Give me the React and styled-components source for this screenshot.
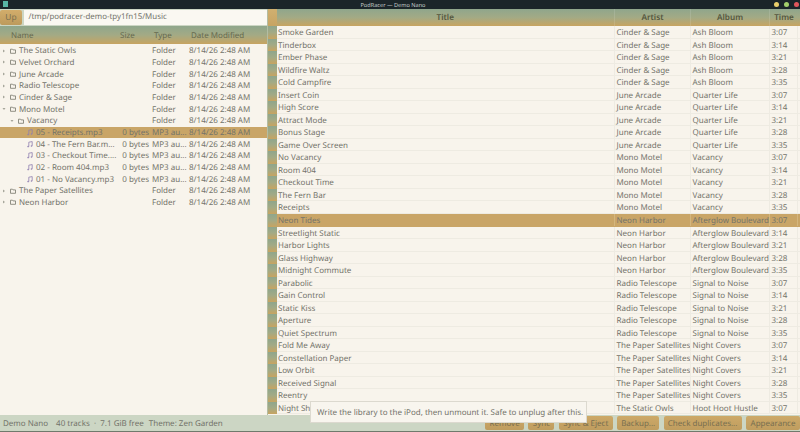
import React from 'react';
import styled, { createGlobalStyle } from 'styled-components';

const GlobalStyle = createGlobalStyle`
  html, body {
    margin: 0;
    padding: 0;
    background: #ccd6c4;
  }
  * {
    box-sizing: border-box;
  }
`;

const headerGradient = 'linear-gradient(to bottom, #8fa68c 0%, #a3aa85 50%, #c7a461 100%)';

const Window = styled.div`
  width: 800px;
  height: 432px;
  display: flex;
  flex-direction: column;
  overflow: hidden;
  position: relative;
  font-family: "Noto Sans", sans-serif;
  font-size: 8px;
  text-rendering: geometricPrecision;
  color: #73736a;
  background: #ccd6c4;
`;

const TitleBar = styled.div`
  height: 9px;
  flex: none;
  display: flex;
  align-items: center;
  justify-content: center;
  position: relative;
  padding-right: 14px;
  background: #1b2529;
  color: #c6cccb;
  font-size: 5.6px;
`;

const AppIcon = styled.span`
  position: absolute;
  left: 3px;
  top: 1px;
  width: 5px;
  height: 6px;
  background: #58b5a5;
`;

const Dots = styled.div`
  position: absolute;
  right: 1px;
  top: 2px;
  display: flex;
  gap: 5px;
`;

const Dot = styled.span`
  width: 5px;
  height: 5px;
  border-radius: 50%;
  background: ${(p) => p.$color};
`;

const Panes = styled.div`
  flex: 1;
  min-height: 0;
  display: flex;
`;

const LeftPane = styled.div`
  width: 267px;
  flex: none;
  display: flex;
  flex-direction: column;
  background: #f8f4ec;
`;

const PathBar = styled.div`
  height: 17px;
  flex: none;
  display: flex;
  gap: 2px;
  padding-top: 1px;
  background: #ccd6c4;
`;

const UpButton = styled.div`
  width: 22px;
  height: 15px;
  display: flex;
  align-items: center;
  justify-content: center;
  border-radius: 2px;
  background: linear-gradient(to bottom, #d2ad6b, #bd9a5c);
  color: #7a7150;
  font-size: 8.4px;
`;

const PathInput = styled.div`
  flex: 1;
  height: 15px;
  padding-left: 4.5px;
  line-height: 15px;
  background: #faf8f2;
  font-size: 7.9px;
`;

const FileHeader = styled.div`
  height: 18px;
  flex: none;
  display: grid;
  grid-template-columns: 120px 34px 37px 1fr;
  align-items: center;
  padding-top: 1px;
  background: ${headerGradient};
  color: #66694f;
`;

const HeaderLabel = styled.span`
  padding-left: ${(p) => p.$left || 0}px;
`;

const FileList = styled.div`
  flex: 1;
  padding-top: 1px;
`;

const FileRow = styled.div`
  height: 11.67px;
  display: grid;
  grid-template-columns: 122px 29px 37px 1fr;
  align-items: center;
  white-space: nowrap;
  background: ${(p) => (p.$selected ? '#c9a567' : 'transparent')};
`;

const NameCell = styled.div`
  display: flex;
  align-items: center;
  padding-left: ${(p) => p.$indent}px;
  overflow: hidden;
`;

const Arrow = styled.span`
  width: 8px;
  margin-right: 2px;
  flex: none;
  display: flex;
  justify-content: center;
`;

const CellIcon = styled.svg`
  flex: none;
  margin-right: 3px;
`;

const SizeCell = styled.span`
  text-align: right;
  padding-right: 2px;
`;

const TypeCell = styled.span`
  padding-left: 1px;
  overflow: hidden;
`;

const DateCell = styled.span`
  padding-left: 1px;
`;

const Splitter = styled.div`
  width: 1px;
  flex: none;
  background: #b3bda3;
`;

const RightPane = styled.div`
  flex: 1;
  min-width: 0;
  display: flex;
  flex-direction: column;
  background: #f8f4ec;
`;

const trackColumns = '8.5px 338.5px 76px 79px 28px 1fr';

const TrackHeader = styled.div`
  height: 17px;
  flex: none;
  display: grid;
  grid-template-columns: ${trackColumns};
  background: ${headerGradient};
  color: #55573f;
  font-weight: 600;
  font-size: 8.2px;
  line-height: 17px;
  text-align: center;
`;

const CornerCell = styled.span`
  background: linear-gradient(to bottom, #d0b070, #c7a463);
`;

const HeaderCell = styled.span`
  border-right: 1px solid rgba(255, 255, 255, 0.12);
`;

const TrackRow = styled.div`
  height: 12.54px;
  display: grid;
  grid-template-columns: ${trackColumns};
  white-space: nowrap;
  line-height: 13.5px;
  background: ${(p) => (p.$selected ? '#c9a567' : 'transparent')};
  border-bottom: 1px solid ${(p) => (p.$selected ? '#c9a567' : '#eeebe2')};
`;

const RowHandle = styled.span`
  margin-bottom: -1px;
  background: ${headerGradient};
`;

const TrackCell = styled.span`
  padding-left: 1.5px;
  border-right: 1px solid ${(p) => (p.$selected ? '#d4b67e' : '#eeebe2')};
  overflow: hidden;
`;

const StatusBar = styled.div`
  height: 17px;
  flex: none;
  display: flex;
  align-items: center;
  padding-left: 3px;
  background: #ccd6c4;
  border-bottom: 1px solid #6f7a6c;
`;

const StatusText = styled.span`
  margin-right: ${(p) => p.$gap || 0}px;
  white-space: pre;
`;

const ButtonRow = styled.div`
  margin-left: auto;
  display: flex;
  gap: 4.4px;
  height: 14px;
`;

const ActionButton = styled.div`
  width: ${(p) => p.$width}px;
  display: flex;
  align-items: center;
  justify-content: center;
  border-radius: 2px;
  background: linear-gradient(to bottom, #cda968, #bf9d5f);
  color: #786f50;
  white-space: nowrap;
`;

const Tooltip = styled.div`
  position: absolute;
  left: 310px;
  top: 401px;
  width: 277px;
  height: 22px;
  display: flex;
  align-items: center;
  padding-left: 6px;
  background: #f8f5ee;
  border: 1px solid #dcd9cf;
  white-space: nowrap;
`;

const folder = (name, indent = 0, arrow = 'right') => ({ name, indent, arrow, folder: true });
const song = (name, selected) => ({ name, indent: 27, selected });

const files = [
  folder('The Static Owls'),
  folder('Velvet Orchard'),
  folder('June Arcade'),
  folder('Radio Telescope'),
  folder('Cinder & Sage'),
  folder('Mono Motel', 0, 'down'),
  folder('Vacancy', 8, 'down'),
  song('05 - Receipts.mp3', true),
  song('04 - The Fern Bar.m...'),
  song('03 - Checkout Time....'),
  song('02 - Room 404.mp3'),
  song('01 - No Vacancy.mp3'),
  folder('The Paper Satellites'),
  folder('Neon Harbor'),
];

const times = ['3:07', '3:14', '3:21', '3:28', '3:35'];

const albums = [
  ['Cinder & Sage', 'Ash Bloom', ['Smoke Garden', 'Tinderbox', 'Ember Phase', 'Wildfire Waltz', 'Cold Campfire']],
  ['June Arcade', 'Quarter Life', ['Insert Coin', 'High Score', 'Attract Mode', 'Bonus Stage', 'Game Over Screen']],
  ['Mono Motel', 'Vacancy', ['No Vacancy', 'Room 404', 'Checkout Time', 'The Fern Bar', 'Receipts']],
  ['Neon Harbor', 'Afterglow Boulevard', ['Neon Tides', 'Streetlight Static', 'Harbor Lights', 'Glass Highway', 'Midnight Commute']],
  ['Radio Telescope', 'Signal to Noise', ['Parabolic', 'Gain Control', 'Static Kiss', 'Aperture', 'Quiet Spectrum']],
  ['The Paper Satellites', 'Night Covers', ['Fold Me Away', 'Constellation Paper', 'Low Orbit', 'Received Signal', 'Reentry']],
  ['The Static Owls', 'Hoot Hoot Hustle', ['Night Shift']],
];

const tracks = albums.flatMap(([artist, album, titles]) =>
  titles.map((title, i) => ({ title, artist, album, time: times[i] }))
);

const buttons = [
  ['Remove', 39],
  ['Sync', 26],
  ['Sync & Eject', 54],
  ['Backup...', 42],
  ['Check duplicates...', 78],
  ['Appearance', 54],
];

const FolderIcon = () => (
  <CellIcon width="6" height="6" viewBox="0 0 6 6">
    <path d="M.5 1.2h2l.5.7h2.5v3.4h-5z" fill="none" stroke="#77776c" strokeWidth=".8" />
  </CellIcon>
);

const NoteIcon = () => (
  <CellIcon width="6" height="7" viewBox="0 0 6 7">
    <path d="M1.8 5.6V1.2L5.2.6v4.2" fill="none" stroke="#8f7fb0" strokeWidth=".8" />
    <circle cx="1.1" cy="5.6" r=".8" fill="#8f7fb0" />
    <circle cx="4.5" cy="5" r=".8" fill="#8f7fb0" />
  </CellIcon>
);

const Disclosure = ({ dir }) => (
  <Arrow>
    <svg width="4" height="4" viewBox="0 0 4 4">
      <path d={dir === 'down' ? 'M.5 1h3L2 3z' : 'M1 .5v3L3 2z'} fill="#a5a59a" />
    </svg>
  </Arrow>
);

const App = () => (
  <Window>
    <GlobalStyle />
    <TitleBar>
      <AppIcon />
      PodRacer — Demo Nano
      <Dots>
        <Dot $color="#e9cf6c" />
        <Dot $color="#a3cf6b" />
        <Dot $color="#e0565b" />
      </Dots>
    </TitleBar>
    <Panes>
      <LeftPane>
        <PathBar>
          <UpButton>Up</UpButton>
          <PathInput>/tmp/podracer-demo-tpy1fn15/Music</PathInput>
        </PathBar>
        <FileHeader>
          <HeaderLabel $left={11}>Name</HeaderLabel>
          <HeaderLabel>Size</HeaderLabel>
          <HeaderLabel>Type</HeaderLabel>
          <HeaderLabel>Date Modified</HeaderLabel>
        </FileHeader>
        <FileList>
          {files.map((f) => (
            <FileRow key={f.name} $selected={f.selected}>
              <NameCell $indent={f.indent}>
                {f.folder && <Disclosure dir={f.arrow} />}
                {f.folder ? <FolderIcon /> : <NoteIcon />}
                {f.name}
              </NameCell>
              <SizeCell>{f.folder ? '' : '0 bytes'}</SizeCell>
              <TypeCell>{f.folder ? 'Folder' : 'MP3 au...'}</TypeCell>
              <DateCell>8/14/26 2:48 AM</DateCell>
            </FileRow>
          ))}
        </FileList>
      </LeftPane>
      <Splitter />
      <RightPane>
        <TrackHeader>
          <CornerCell />
          <HeaderCell>Title</HeaderCell>
          <HeaderCell>Artist</HeaderCell>
          <HeaderCell>Album</HeaderCell>
          <span>Time</span>
        </TrackHeader>
        {tracks.map((t) => {
          const selected = t.title === 'Neon Tides';
          return (
            <TrackRow key={t.title} $selected={selected}>
              <RowHandle />
              <TrackCell $selected={selected}>{t.title}</TrackCell>
              <TrackCell $selected={selected}>{t.artist}</TrackCell>
              <TrackCell $selected={selected}>{t.album}</TrackCell>
              <TrackCell $selected={selected}>{t.time}</TrackCell>
            </TrackRow>
          );
        })}
      </RightPane>
    </Panes>
    <StatusBar>
      <StatusText $gap={8}>Demo Nano</StatusText>
      <StatusText $gap={5}>40 tracks  ·  7.1 GiB free</StatusText>
      <StatusText>Theme: Zen Garden</StatusText>
      <ButtonRow>
        {buttons.map(([label, width]) => (
          <ActionButton key={label} $width={width}>{label}</ActionButton>
        ))}
      </ButtonRow>
    </StatusBar>
    <Tooltip>Write the library to the iPod, then unmount it. Safe to unplug after this.</Tooltip>
  </Window>
);

export default App;
